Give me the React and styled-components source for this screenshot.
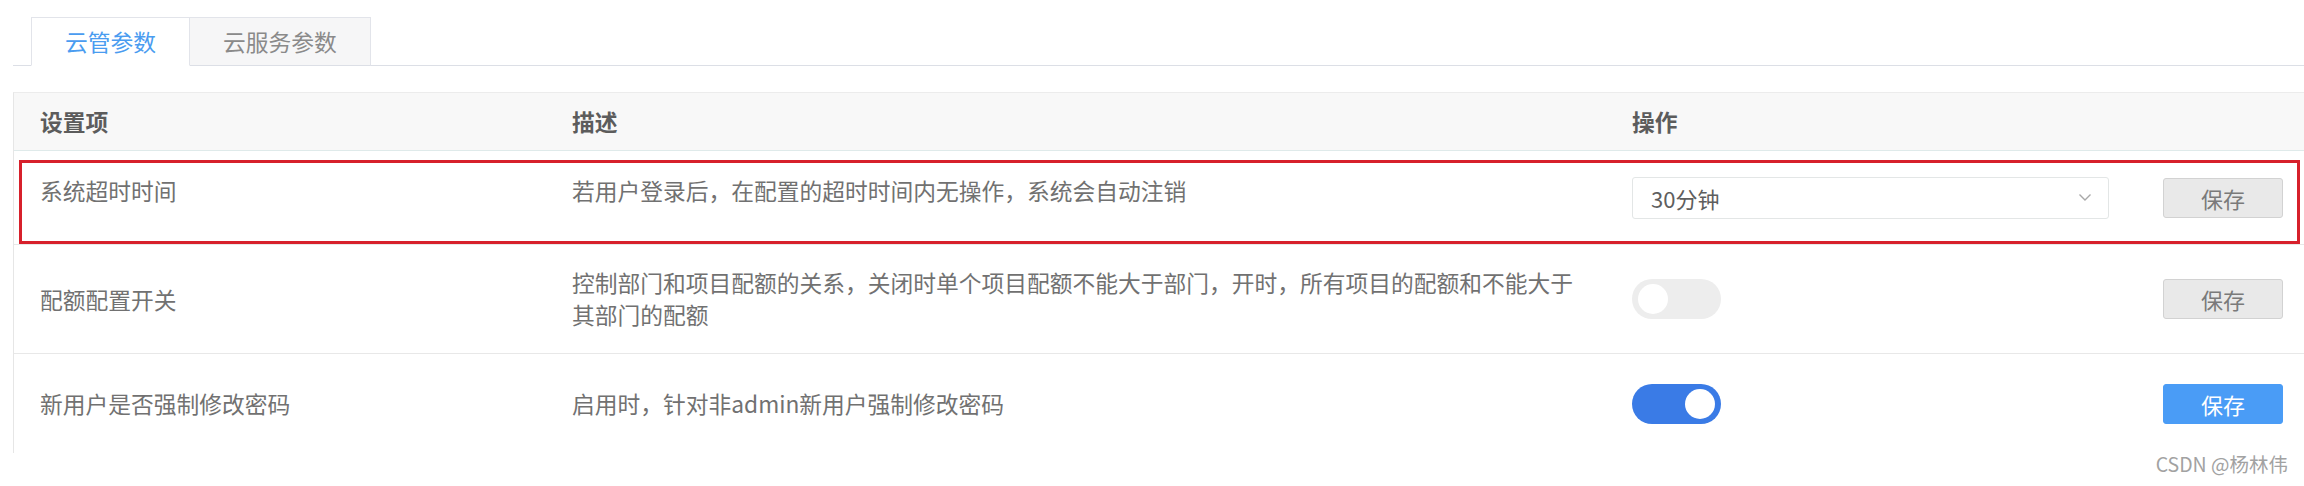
import React from "react";
import styled, { createGlobalStyle } from "styled-components";

const GlobalStyle = createGlobalStyle`
  html, body {
    margin: 0;
    padding: 0;
    background: #fff;
    overflow: hidden;
  }
  body {
    font-family: "Noto Sans CJK SC", "Noto Sans", sans-serif;
  }
`;

const rows = [
  {
    name: "系统超时时间",
    desc: "若用户登录后，在配置的超时时间内无操作，系统会自动注销",
    control: "select",
    height: 94,
    lift: 14,
  },
  {
    name: "配额配置开关",
    desc: "控制部门和项目配额的关系，关闭时单个项目配额不能大于部门，开时，所有项目的配额和不能大于其部门的配额",
    control: "off",
    height: 109,
  },
  {
    name: "新用户是否强制修改密码",
    desc: "启用时，针对非admin新用户强制修改密码",
    control: "on",
    height: 99,
    last: true,
  },
];

const App = () => {
  return (
    <Page>
      <GlobalStyle />
      <TabBar>
        <Tab $active>云管参数</Tab>
        <Tab>云服务参数</Tab>
      </TabBar>

      <Table>
        <HeadRow>
          <HeadCell>设置项</HeadCell>
          <HeadCell>描述</HeadCell>
          <HeadCell>操作</HeadCell>
        </HeadRow>

        {rows.map((r) => (
          <Row key={r.name} $height={r.height} $last={r.last}>
            <Cell $lift={r.lift}>{r.name}</Cell>
            <Cell $lift={r.lift}>
              <Desc>{r.desc}</Desc>
            </Cell>
            <Actions>
              {r.control === "select" ? (
                <Select>
                  <span>30分钟</span>
                  <svg width="14" height="9" viewBox="0 0 14 9">
                    <path d="M1.5 1.5 L7 7 L12.5 1.5" fill="none" stroke="#a8a8a8" strokeWidth="1.4" />
                  </svg>
                </Select>
              ) : (
                <Toggle $on={r.control === "on"}>
                  <Knob $on={r.control === "on"} />
                </Toggle>
              )}
              <SaveButton $primary={r.control === "on"}>保存</SaveButton>
            </Actions>
          </Row>
        ))}

        <Highlight />
      </Table>

      <Watermark>CSDN @杨林伟</Watermark>
    </Page>
  );
};

const Page = styled.div`
  position: relative;
  width: 2304px;
  height: 486px;
  box-sizing: border-box;
  padding: 17px 0 0 13px;
`;

const TabBar = styled.div`
  display: flex;
  height: 48px;
  padding-left: 18px;
  border-bottom: 1px solid #dcdfe6;
`;

const Tab = styled.div`
  box-sizing: border-box;
  height: 49px;
  padding: 0 33px;
  display: flex;
  align-items: center;
  font-size: 22.75px;
  border: 1px solid #e2e4ea;
  border-bottom: 1px solid ${(p) => (p.$active ? "#fff" : "#dcdfe6")};
  border-left: ${(p) => (p.$active ? "1px solid #e2e4ea" : "none")};
  background: ${(p) => (p.$active ? "#fff" : "#f6f6f7")};
  color: ${(p) => (p.$active ? "#4a9cf0" : "#8a8a8a")};
`;

const Table = styled.div`
  position: relative;
  margin-top: 26px;
  border-left: 1px solid #e6e6e6;
  border-top: 1px solid #ececec;
`;

const grid = `
  display: grid;
  grid-template-columns: 532px 1060px 1fr;
`;

const HeadRow = styled.div`
  ${grid}
  height: 57px;
  background: #f8f8f8;
  border-bottom: 1px solid #dfeaea;
`;

const HeadCell = styled.div`
  display: flex;
  align-items: center;
  padding-left: 26px;
  font-size: 22.75px;
  font-weight: 700;
  color: #5c5c5c;
`;

const Row = styled.div`
  ${grid}
  box-sizing: border-box;
  height: ${(p) => p.$height}px;
  border-bottom: ${(p) => (p.$last ? "none" : "1px solid #e8e8e8")};
`;

const Cell = styled.div`
  display: flex;
  align-items: center;
  padding-left: 26px;
  padding-bottom: ${(p) => p.$lift || 0}px;
  font-size: 22.75px;
  color: #717171;
`;

const Desc = styled.div`
  max-width: 1010px;
  line-height: 32px;
`;

const Actions = styled.div`
  display: flex;
  align-items: center;
  gap: 54px;
  padding-left: 26px;
`;

const Select = styled.div`
  box-sizing: border-box;
  width: 477px;
  height: 42px;
  display: flex;
  align-items: center;
  justify-content: space-between;
  padding: 0 16px 0 18px;
  border: 1px solid #e3e6e6;
  border-radius: 3px;
  font-size: 22px;
  color: #5e5e5e;
`;

const Toggle = styled.div`
  box-sizing: border-box;
  width: 89px;
  height: 40px;
  border-radius: 20px;
  padding: 0 6px;
  display: flex;
  align-items: center;
  justify-content: ${(p) => (p.$on ? "flex-end" : "flex-start")};
  background: ${(p) => (p.$on ? "#3a7be6" : "#ededed")};
  margin-right: 388px;
`;

const Knob = styled.div`
  width: 30px;
  height: 30px;
  border-radius: 50%;
  background: #fff;
`;

const SaveButton = styled.button`
  box-sizing: border-box;
  width: 120px;
  height: 40px;
  border-radius: 3px;
  border: 1px solid ${(p) => (p.$primary ? "#4a9cf6" : "#d2d2d2")};
  background: ${(p) => (p.$primary ? "#4a9cf6" : "#e9e9e9")};
  color: ${(p) => (p.$primary ? "#fff" : "#7a7a7a")};
  font-family: inherit;
  font-size: 22px;
  padding: 0;
`;

const Highlight = styled.div`
  position: absolute;
  top: 67px;
  left: 5px;
  right: 4px;
  height: 84px;
  box-sizing: border-box;
  border: 3px solid #d7202b;
  pointer-events: none;
`;

const Watermark = styled.div`
  position: absolute;
  right: 16px;
  bottom: 8px;
  font-size: 19.5px;
  color: #a2a2a2;
  text-shadow: 0 0 2px #fff;
`;

export default App;
